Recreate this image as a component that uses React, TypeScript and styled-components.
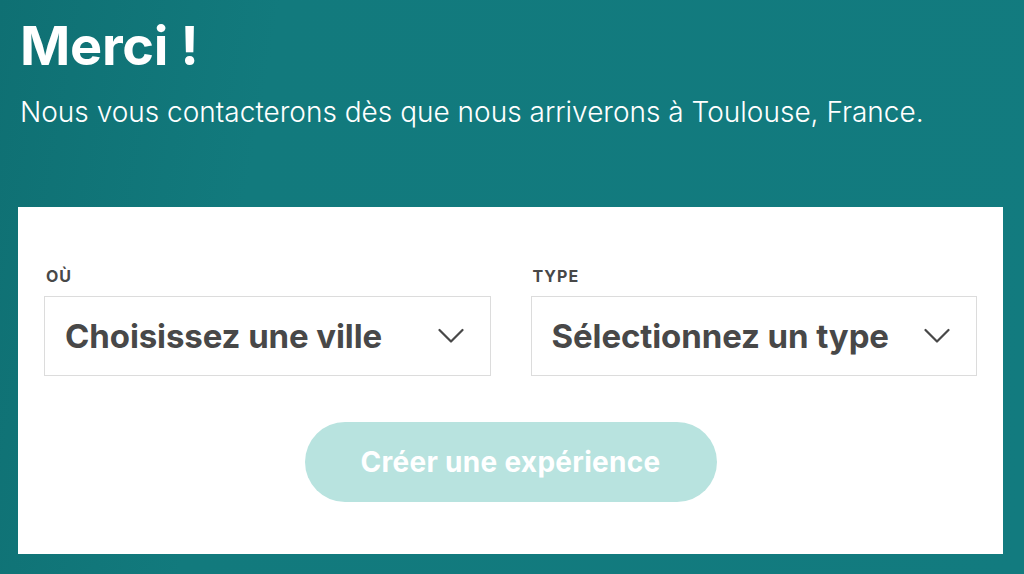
import React from "react";
import styled, { createGlobalStyle } from "styled-components";

const GlobalStyle = createGlobalStyle`
  html, body {
    margin: 0;
    padding: 0;
    background: #127a7d;
  }
  body {
    font-family: Inter, "Noto Sans", sans-serif;
    -webkit-font-smoothing: antialiased;
  }
  * { box-sizing: border-box; }
`;

const Page = styled.div`
  width: 1024px;
  height: 574px;
  overflow: hidden;
  background: linear-gradient(100deg, #0f7073 0%, #127a7d 25%, #127b7f 100%);
  display: flex;
  flex-direction: column;
`;

const Header = styled.header`
  padding: 15px 20px 0 20px;
  color: #ffffff;
`;

const Title = styled.h1`
  margin: 0;
  font-size: 54px;
  line-height: 62px;
  font-weight: 700;
  letter-spacing: -0.3px;
`;

const Subtitle = styled.p`
  margin: 17px 0 0 0;
  font-size: 28px;
  line-height: 36px;
  font-weight: 300;
`;

const Card = styled.section`
  margin: 77px 21px 0 18px;
  background: #ffffff;
  padding: 60px 26px 52px 26px;
  display: flex;
  flex-direction: column;
  align-items: center;
`;

const Fields = styled.div`
  width: 100%;
  display: grid;
  grid-template-columns: 1fr 1fr;
  column-gap: 40px;
`;

const Field = styled.div`
  display: flex;
  flex-direction: column;
`;

const Label = styled.label`
  font-size: 16px;
  line-height: 18px;
  font-weight: 700;
  color: #484848;
  letter-spacing: 1px;
  margin: 0 0 11px 2px;
`;

const SelectBox = styled.div`
  height: 80px;
  border: 1px solid #dcdcdc;
  display: flex;
  align-items: center;
  justify-content: space-between;
  padding: 0 26px 0 20px;
  color: #484848;
`;

const SelectText = styled.span`
  font-size: 33px;
  font-weight: 700;
  letter-spacing: -0.1px;
`;

const Chevron = styled.svg`
  width: 26px;
  height: 16px;
  flex: none;
`;

const Button = styled.button`
  margin-top: 46px;
  width: 412px;
  height: 80px;
  border: none;
  border-radius: 40px;
  background: #b8e3df;
  color: #ffffff;
  font-family: inherit;
  font-size: 28px;
  font-weight: 700;
  letter-spacing: 0.3px;
  cursor: pointer;
`;

const ChevronDown = () => (
  <Chevron viewBox="0 0 26 16" fill="none">
    <path d="M1.5 2 L13 13.5 L24.5 2" stroke="#484848" strokeWidth="2.2" strokeLinecap="round" strokeLinejoin="round" />
  </Chevron>
);

export default function App() {
  return (
    <>
      <GlobalStyle />
      <Page>
        <Header>
          <Title>Merci !</Title>
          <Subtitle>Nous vous contacterons dès que nous arriverons à Toulouse, France.</Subtitle>
        </Header>
        <Card>
          <Fields>
            <Field>
              <Label>OÙ</Label>
              <SelectBox>
                <SelectText>Choisissez une ville</SelectText>
                <ChevronDown />
              </SelectBox>
            </Field>
            <Field>
              <Label>TYPE</Label>
              <SelectBox>
                <SelectText>Sélectionnez un type</SelectText>
                <ChevronDown />
              </SelectBox>
            </Field>
          </Fields>
          <Button>Créer une expérience</Button>
        </Card>
      </Page>
    </>
  );
}
